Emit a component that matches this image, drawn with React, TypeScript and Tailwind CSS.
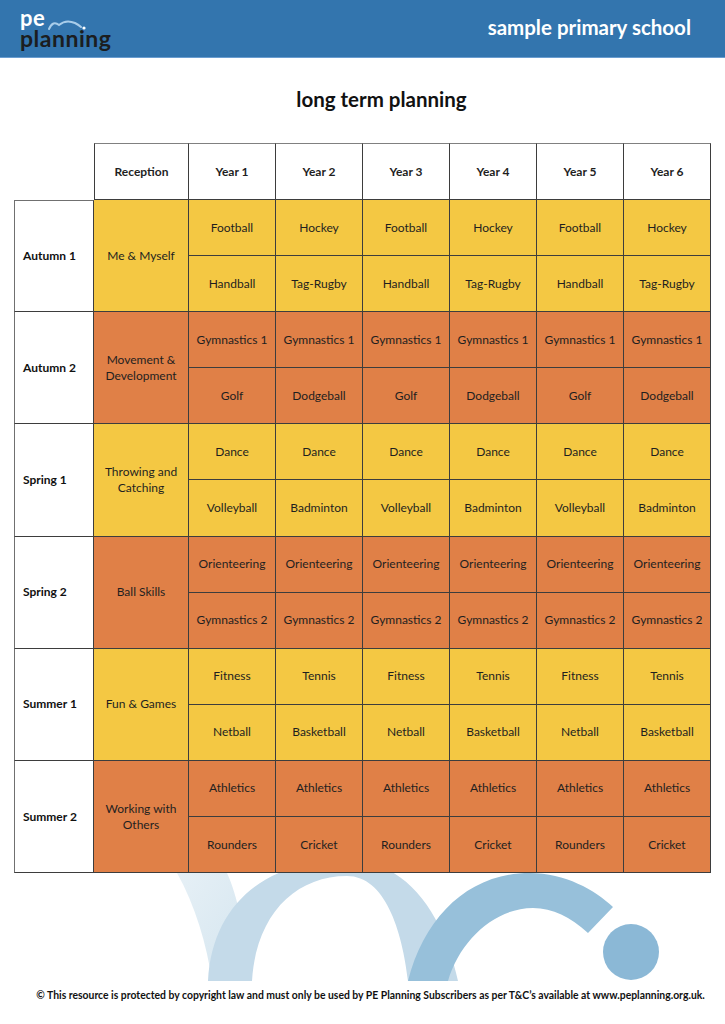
import React from 'react'

const years = ['Year 1', 'Year 2', 'Year 3', 'Year 4', 'Year 5', 'Year 6']

const terms = [
  { name: 'Autumn 1', reception: 'Me & Myself', colour: 'bg-[#f4c843]', top: ['Football', 'Hockey'], bottom: ['Handball', 'Tag-Rugby'] },
  { name: 'Autumn 2', reception: 'Movement & Development', colour: 'bg-[#e08047]', top: ['Gymnastics 1', 'Gymnastics 1'], bottom: ['Golf', 'Dodgeball'] },
  { name: 'Spring 1', reception: 'Throwing and Catching', colour: 'bg-[#f4c843]', top: ['Dance', 'Dance'], bottom: ['Volleyball', 'Badminton'] },
  { name: 'Spring 2', reception: 'Ball Skills', colour: 'bg-[#e08047]', top: ['Orienteering', 'Orienteering'], bottom: ['Gymnastics 2', 'Gymnastics 2'] },
  { name: 'Summer 1', reception: 'Fun & Games', colour: 'bg-[#f4c843]', top: ['Fitness', 'Tennis'], bottom: ['Netball', 'Basketball'] },
  { name: 'Summer 2', reception: 'Working with Others', colour: 'bg-[#e08047]', top: ['Athletics', 'Athletics'], bottom: ['Rounders', 'Cricket'] },
]

const Logo = () => (
  <div className="relative w-[110px] h-[42px] leading-none" style={{ fontFamily: 'Lato, "Noto Sans", sans-serif' }}>
    <div className="h-[19px] text-[22px] font-bold text-white leading-[19px] tracking-[0.5px]">pe</div>
    <div className="h-[23px] text-[23px] font-bold text-[#1b1d20] leading-[23px] tracking-[0.5px]">planning</div>
    <svg className="absolute left-0 top-0" width="110" height="42" viewBox="0 0 110 42">
      <path d="M29 21 Q33 12 39 17 Q46 11 55 15 Q59 17 61 19" fill="none" stroke="#a9cdea" strokeWidth="2" strokeLinecap="round" />
      <circle cx="64" cy="20" r="1.6" fill="#ffffff" />
    </svg>
  </div>
)

const Swooshes = () => (
  <svg width="725" height="110" viewBox="0 873 725 110" className="block">
    <defs>
      <linearGradient id="pale" x1="0" y1="0" x2="1" y2="1">
        <stop offset="0" stopColor="#e6f0f6" />
        <stop offset="1" stopColor="#d4e5ef" />
      </linearGradient>
    </defs>
    <path d="M177 873 C195 905 207 945 212 981 L250 981 C245 930 237 895 227 873 Z" fill="url(#pale)" />
    <path d="M208 981 C212 905 265 860 347 860 C410 860 445 920 458 981 L408 981 C402 930 385 876 347 876 C295 876 256 915 252 981 Z" fill="#c4dae9" />
    <path d="M408 981 C425 915 470 873 530 873 C565 873 595 890 613 907 L588 933 C570 917 553 908 533 908 C495 908 460 940 448 981 Z" fill="#97c0da" />
    <circle cx="631" cy="952" r="28" fill="#8bb8d6" />
  </svg>
)

const cell = 'flex items-center justify-center text-center border-r border-b border-[#3d3d3d] text-[12px] text-[#1f1f1f]'

const App = () => {
  return (
    <div className="w-[725px] h-[1024px] bg-white overflow-hidden" style={{ fontFamily: 'Lato, "Noto Sans", sans-serif' }}>
      <div className="h-[58px] bg-[#3375ae] border-b border-[#6a9dd0] flex items-center justify-between pl-[20px] pr-[34px]">
        <Logo />
        <div className="text-[20.5px] font-bold text-white pb-[2px]">sample primary school</div>
      </div>

      <h1 className="mt-[29px] pl-[38px] text-center text-[20.5px] leading-[24px] font-bold text-[#111]">long term planning</h1>

      <div className="mt-[32px] ml-[14px] grid grid-cols-[80px_95px_repeat(6,87px)] grid-rows-[57px_repeat(12,56.1px)]">
        <div />
        <div className={`${cell} font-bold border-t border-l border-t-[#808080]`}>Reception</div>
        {years.map((y) => (
          <div key={y} className={`${cell} font-bold border-t border-t-[#808080]`}>{y}</div>
        ))}

        {terms.map((t, i) => (
          <React.Fragment key={t.name}>
            <div
              className={`row-span-2 flex items-center pl-[8px] border-l border-r border-b border-[#3d3d3d] border-l-[#707070] text-[12px] font-bold text-[#111] ${i === 0 ? 'border-t border-t-[#707070]' : ''}`}
            >
              {t.name}
            </div>
            <div className={`${cell} ${t.colour} row-span-2 px-[8px] leading-[16px]`}>{t.reception}</div>
            {years.map((y, j) => (
              <div key={y + 'a'} className={`${cell} ${t.colour}`}>{t.top[j % 2]}</div>
            ))}
            {years.map((y, j) => (
              <div key={y + 'b'} className={`${cell} ${t.colour}`}>{t.bottom[j % 2]}</div>
            ))}
          </React.Fragment>
        ))}
      </div>

      <Swooshes />

      <p className="mt-[5px] pl-[16px] text-center text-[10.4px] leading-[14px] font-bold text-[#111] whitespace-nowrap">
        © This resource is protected by copyright law and must only be used by PE Planning Subscribers as per T&C’s available at www.peplanning.org.uk.
      </p>
    </div>
  )
}

export default App
